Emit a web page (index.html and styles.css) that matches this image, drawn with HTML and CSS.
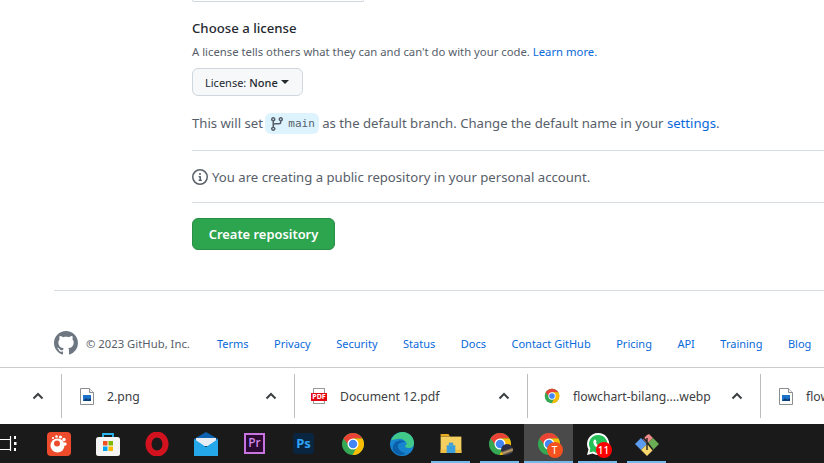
FILE: index.html
```html
<!DOCTYPE html>
<html lang="en">
<head>
    <meta charset="UTF-8">
    <meta name="viewport" content="width=device-width, initial-scale=1.0">
    <title>New repository</title>
    <link rel="stylesheet" href="styles.css">
</head>
<body>
    <svg class="defs" width="0" height="0">
        <symbol id="chrome" viewBox="0 0 48 48">
            <circle cx="24" cy="24" r="22" fill="#34a853"/>
            <path d="M5 13A22 22 0 0 1 43 13H24L15 26Z" fill="#ea4335"/>
            <path d="M43 13A22 22 0 0 1 23 46L33 28L24 13Z" fill="#fbbc04"/>
            <circle cx="24" cy="24" r="11" fill="#fff"/>
            <circle cx="24" cy="24" r="8.5" fill="#4285f4"/>
        </symbol>
        <symbol id="chevron" viewBox="0 0 12 8">
            <path d="M1.500 6.500 6 2l4.500 4.500" fill="none" stroke="#3c4043" stroke-width="2"/>
        </symbol>
        <symbol id="imgfile" viewBox="0 0 14 17">
            <path d="M.5.500h9l4 4v12H.500z" fill="#fff" stroke="#8a8d91"/>
            <path d="M9.500.500v4h4" fill="#eee" stroke="#8a8d91"/>
            <rect x="3" y="7" width="8" height="6" fill="#1a73c8"/>
            <path d="M3 13l3-3 2 1.500 3-1.500v3z" fill="#0b3f7a"/>
        </symbol>
    </svg>

    <div class="page">
        <main class="main">
            <div class="form">
                <div class="cut-input"></div>
                <h3 class="title">Choose a license</h3>
                <p class="note">A license tells others what they can and can't do with your code. <a href="#">Learn more.</a></p>
                <button class="select-btn">License: <b>None</b><span class="caret"></span></button>
                <p class="line">This will set <span class="branch"><svg width="16" height="16" viewBox="0 0 16 16"><path fill="#57606a" d="M9.500 3.250a2.250 2.250 0 1 1 3 2.122V6A2.500 2.500 0 0 1 10 8.500H6a1 1 0 0 0-1 1v1.128a2.251 2.251 0 1 1-1.500 0V5.372a2.250 2.250 0 1 1 1.500 0v1.836A2.493 2.493 0 0 1 6 7h4a1 1 0 0 0 1-1v-.628A2.250 2.250 0 0 1 9.500 3.250Zm-6 0a.750.750 0 1 0 1.500 0 .750.750 0 0 0-1.500 0Zm8.250-.750a.750.750 0 1 0 0 1.500.750.750 0 0 0 0-1.500ZM4.250 12a.750.750 0 1 0 0 1.500.750.750 0 0 0 0-1.500Z"/></svg><code>main</code></span> as the default branch. Change the default name in your <a href="#">settings</a>.</p>
                <hr class="rule rule-first">
                <p class="info">
                    <svg width="16" height="16" viewBox="0 0 16 16"><path fill="#57606a" d="M0 8a8 8 0 1 1 16 0A8 8 0 0 1 0 8Zm8-6.500a6.500 6.500 0 1 0 0 13 6.500 6.500 0 0 0 0-13ZM6.500 7.750A.750.750 0 0 1 7.250 7h1a.750.750 0 0 1 .750.750v2.750h.250a.750.750 0 0 1 0 1.500h-2a.750.750 0 0 1 0-1.500h.250v-2h-.250a.750.750 0 0 1-.750-.750ZM8 6a1 1 0 1 1 0-2 1 1 0 0 1 0 2Z"/></svg>
                    You are creating a public repository in your personal account.
                </p>
                <hr class="rule rule-second">
                <button class="create-btn">Create repository</button>
            </div>
            <footer class="footer">
                <div class="footer-row">
                    <svg width="24" height="24" viewBox="0 0 16 16"><path fill="#6e7781" d="M8 0C3.580 0 0 3.580 0 8c0 3.540 2.290 6.530 5.470 7.590.4.070.55-.17.55-.38 0-.19-.01-.82-.01-1.490-2.010.37-2.530-.49-2.690-.94-.09-.23-.48-.94-.82-1.130-.28-.15-.68-.52-.01-.53.63-.01 1.080.58 1.230.82.72 1.210 1.870.87 2.330.66.07-.52.28-.87.51-1.070-1.780-.2-3.640-.89-3.640-3.950 0-.87.31-1.590.82-2.150-.08-.2-.36-1.020.08-2.120 0 0 .67-.21 2.200.82.64-.18 1.320-.27 2-.27.68 0 1.360.09 2 .27 1.530-1.040 2.200-.82 2.200-.82.44 1.100.16 1.920.08 2.120.51.56.82 1.270.82 2.150 0 3.070-1.870 3.750-3.650 3.950.29.25.54.73.54 1.480 0 1.070-.01 1.930-.01 2.200 0 .21.15.46.55.38A8.013 8.013 0 0 0 16 8c0-4.420-3.580-8-8-8z"/></svg>
                    <span class="copy">© 2023 GitHub, Inc.</span>
                    <nav class="footer-links">
                        <a href="#">Terms</a>
                        <a href="#">Privacy</a>
                        <a href="#">Security</a>
                        <a href="#">Status</a>
                        <a href="#">Docs</a>
                        <a href="#">Contact GitHub</a>
                        <a href="#">Pricing</a>
                        <a href="#">API</a>
                        <a href="#">Training</a>
                        <a href="#">Blog</a>
                    </nav>
                </div>
            </footer>
        </main>

        <!-- download bar -->
        <div class="shelf">
            <div class="shelf-item shelf-first">
                <svg class="chev" width="12" height="8"><use href="#chevron"/></svg>
            </div>
            <div class="shelf-item">
                <svg class="file-icon" width="14" height="17"><use href="#imgfile"/></svg>
                <span class="file-name">2.png</span>
                <svg class="chev" width="12" height="8"><use href="#chevron"/></svg>
            </div>
            <div class="shelf-item">
                <span class="pdf-icon"><span class="pdf-tag">PDF</span></span>
                <span class="file-name">Document 12.pdf</span>
                <svg class="chev" width="12" height="8"><use href="#chevron"/></svg>
            </div>
            <div class="shelf-item">
                <svg class="file-icon chrome-file" width="16" height="16"><use href="#chrome"/></svg>
                <span class="file-name">flowchart-bilang....webp</span>
                <svg class="chev" width="12" height="8"><use href="#chevron"/></svg>
            </div>
            <div class="shelf-item shelf-last">
                <svg class="file-icon" width="14" height="17"><use href="#imgfile"/></svg>
                <span class="file-name">flow</span>
            </div>
        </div>

        <!-- taskbar -->
        <div class="taskbar">
            <div class="slot">
                <svg width="49" height="39" viewBox="0 0 49 39"><path d="M15 15.500h10.500v10H15M25.500 12v15" fill="none" stroke="#fff" stroke-width="1.200"/><rect x="29" y="12" width="2" height="3" fill="#fff"/><rect x="29" y="18" width="2.500" height="3" fill="#fff"/><rect x="29" y="24" width="2" height="3" fill="#fff"/></svg>
            </div>
            <div class="slot">
                <svg width="24" height="24" viewBox="0 0 24 24"><rect width="24" height="24" rx="4" fill="#ee4a2c"/><circle cx="10.500" cy="13.500" r="7" fill="#fff"/><circle cx="10" cy="11.500" r="3" fill="#ee4a2c"/><circle cx="18" cy="12" r="1.700" fill="#fff"/><circle cx="17" cy="7.500" r="1.700" fill="#fff"/><circle cx="13.500" cy="5" r="1.600" fill="#fff"/><circle cx="9.500" cy="4.500" r="1.300" fill="#fff"/><circle cx="6" cy="6" r="1.100" fill="#fff"/></svg>
            </div>
            <div class="slot">
                <svg width="24" height="24" viewBox="0 0 24 24"><path d="M7 6V2h10v4" fill="none" stroke="#29b6f0" stroke-width="1.800"/><rect y="5" width="24" height="19" rx="2.500" fill="#f4f4f4"/><rect x="7" y="9" width="4.500" height="4.500" fill="#f25022"/><rect x="12.500" y="9" width="4.500" height="4.500" fill="#7fba00"/><rect x="7" y="14.500" width="4.500" height="4.500" fill="#00a4ef"/><rect x="12.500" y="14.500" width="4.500" height="4.500" fill="#ffb900"/></svg>
            </div>
            <div class="slot">
                <svg width="24" height="24" viewBox="0 0 24 24"><ellipse cx="12" cy="12" rx="8.500" ry="9.500" fill="none" stroke="#d3121f" stroke-width="6"/></svg>
            </div>
            <div class="slot">
                <svg width="24" height="24" viewBox="0 0 24 24"><path d="M0 7 12 0l12 7v3H0z" fill="#0f62b0"/><path d="M2 6h20v8H2z" fill="#e8eef4"/><path d="M0 7l12 8 12-8v17H0z" fill="#25a8ea"/></svg>
            </div>
            <div class="slot">
                <span class="pr-icon">Pr</span>
            </div>
            <div class="slot">
                <span class="ps-icon">Ps</span>
            </div>
            <div class="slot">
                <svg width="24" height="24"><use href="#chrome"/></svg>
            </div>
            <div class="slot">
                <svg width="24" height="24" viewBox="0 0 24 24"><circle cx="12" cy="12" r="12" fill="#1784d0"/><path d="M1 9C3 2 9 0 13 0c6 0 11 5 11 11 0 3-2 5-5 5-3 0-4-1-4-2 2-1 2-3 1-4-2-3-6-4-9-3-3 .5-5 1-6 2z" fill="#41c98a"/><path d="M8 14c0 4 4 7 8 7-5 4-11 1-13-3-1-3 1-8 5-9 3-1 6 0 7 1-4 0-7 1-7 4z" fill="#0b5ea8"/></svg>
            </div>
            <div class="slot slot-open">
                <svg width="22" height="19" viewBox="0 0 24 22"><path d="M0 0h9l2 3h-11z" fill="#e8a91f"/><rect y="3" width="24" height="19" fill="#f5cf5f"/><rect y="18" width="24" height="4" fill="#eebf45"/><path d="M7 13h10v9H7z" fill="#3aa0dd"/><path d="M9.500 10h5v3h-5z" fill="#3aa0dd"/></svg>
            </div>
            <div class="slot slot-open">
                <span class="stack">
                    <svg width="24" height="24"><use href="#chrome"/></svg>
                    <span class="avatar"></span>
                </span>
            </div>
            <div class="slot slot-active">
                <span class="stack">
                    <svg width="24" height="24"><use href="#chrome"/></svg>
                    <span class="badge badge-t">T</span>
                </span>
            </div>
            <div class="slot slot-open">
                <span class="stack">
                    <svg width="24" height="24" viewBox="0 0 24 24"><path d="M12 1a11 11 0 0 0-9.500 16.500L1 23l5.700-1.500A11 11 0 1 0 12 1z" fill="#fff"/><path d="M12 3a9 9 0 0 0-7.700 13.600L3.500 20.500l3.900-1A9 9 0 1 0 12 3z" fill="#25c158"/><path d="M8 8c1-1 2 0 2.500 1.500L10 11c1 1.500 2 2.500 3.500 3l1.300-.8c1.500.5 2.500 1.200 2 2.300-1 1.500-3 1.500-6 0C8 14 6.500 10 8 8z" fill="#fff"/></svg>
                    <span class="badge badge-n">11</span>
                </span>
            </div>
            <div class="slot slot-open">
                <svg width="24" height="24" viewBox="0 0 24 24"><path d="M8 7 12 3l2-1 4 4-2 2-4 4z" fill="#ec8a8a"/><path d="M0 12l6-6 6 6-6 6z" fill="#5b9cf0"/><path d="M12 12l6-6 6 6-6 6z" fill="#6cae54"/><path d="M6 18l6-6 6 6-6 6z" fill="#f5d76e"/><path d="M8 5l10 13M12 6v12" stroke="#222" stroke-width="1.400" fill="none"/></svg>
            </div>
        </div>
    </div>
</body>
</html>
```

FILE: styles.css
```css
* {
    box-sizing: border-box;
}

body {
    margin: 0;
    background-color: #fff;
    color: #57606a;
    font-family: "Noto Sans", Arial, sans-serif;
    overflow: hidden;
}

a {
    color: #0969da;
    text-decoration: none;
}

.defs {
    display: block;
    height: 0;
}

.page {
    display: flex;
    flex-direction: column;
    width: 824px;
    height: 463px;
    overflow: hidden;
}

.main {
    height: 367px;
    flex-shrink: 0;
    overflow: hidden;
}

.form {
    padding-left: 192px;
}

.cut-input {
    width: 172px;
    height: 2px;
    border: 1px solid #d0d7de;
    border-top: 0;
    border-radius: 0 0 4px 4px;
}

.title {
    margin: 16px 0 0;
    color: #24292f;
    font-size: 13.2px;
    font-weight: 500;
    line-height: 20px;
}

.note {
    margin: 5px 0 0;
    font-size: 11.3px;
    line-height: 18px;
}

.select-btn {
    display: flex;
    align-items: center;
    height: 28px;
    width: 111px;
    margin-top: 7px;
    padding: 0 0 0 12px;
    background-color: #f6f8fa;
    border: 1px solid #d0d7de;
    border-radius: 6px;
    color: #24292f;
    font-family: inherit;
    font-size: 11px;
}

.select-btn b {
    margin-left: 3px;
    font-weight: 500;
}

.caret {
    margin-left: 3px;
    border-top: 4px solid #24292f;
    border-left: 4px solid transparent;
    border-right: 4px solid transparent;
}

.line {
    height: 21px;
    margin: 17px 0 0;
    font-size: 13.15px;
    line-height: 21px;
    white-space: nowrap;
}

.branch {
    display: inline-flex;
    align-items: center;
    vertical-align: top;
    gap: 3px;
    height: 21px;
    margin-left: -1px;
    padding: 0 4px;
    background-color: #ddf4ff;
    border-radius: 6px;
}

.branch code {
    font-family: "DejaVu Sans Mono", "Liberation Mono", monospace;
    font-size: 11px;
}

.rule {
    height: 1px;
    margin: 0;
    background-color: #d8dee4;
    border: 0;
}

.rule-first {
    margin-top: 16px;
}

.rule-second {
    margin-top: 15px;
}

.info {
    display: flex;
    align-items: center;
    gap: 4px;
    height: 20px;
    margin: 16px 0 0;
    font-size: 13.15px;
}

.create-btn {
    display: block;
    width: 143px;
    height: 32px;
    margin-top: 15px;
    background-color: #2da44e;
    border: 1px solid #298e46;
    border-radius: 6px;
    color: #fff;
    font-family: inherit;
    font-size: 12.9px;
    font-weight: 600;
}

.footer {
    margin: 40px 0 0 54px;
    padding-top: 40px;
    border-top: 1px solid #d8dee4;
}

.footer-row {
    display: flex;
    align-items: center;
    white-space: nowrap;
}

.copy {
    margin-left: 8px;
    font-size: 11.3px;
}

.footer-links {
    display: flex;
    gap: 25.5px;
    margin-left: 27px;
    font-size: 11px;
}

/* download bar */
.shelf {
    display: flex;
    align-items: center;
    height: 57px;
    flex-shrink: 0;
    background-color: #fff;
    border-top: 1px solid #ccc;
    overflow: hidden;
}

.shelf-item {
    display: flex;
    align-items: center;
    flex: 0 0 233px;
    height: 44px;
    padding-left: 18px;
    border-right: 1px solid #bdbdbd;
    position: relative;
}

.shelf-first {
    flex-basis: 62px;
}

.shelf-last {
    flex-basis: 63px;
    border-right: 0;
}

.file-icon {
    flex-shrink: 0;
}

.chrome-file {
    margin-left: -2px;
}

.file-name {
    margin-left: 13px;
    color: #3c4043;
    font-size: 12.2px;
    white-space: nowrap;
}

.shelf-item .chev {
    position: absolute;
    right: 17px;
    top: 18px;
}

.pdf-icon {
    position: relative;
    display: block;
    flex-shrink: 0;
    width: 12px;
    height: 16px;
    background-color: #fff;
    border: 1px solid #9a9a9a;
}

.pdf-tag {
    position: absolute;
    left: -3px;
    top: 4px;
    width: 16px;
    height: 8px;
    background-color: #e30613;
    color: #fff;
    font-size: 7px;
    font-weight: 700;
    line-height: 8px;
    text-align: center;
}

.pdf-icon + .file-name {
    margin-left: 15px;
}

/* taskbar */
.taskbar {
    display: flex;
    flex: 1;
    margin-left: -15px;
    background-color: #1a1a1a;
}

.slot {
    display: flex;
    align-items: center;
    justify-content: center;
    flex: 0 0 49px;
    height: 39px;
    position: relative;
}

.slot-open::after {
    content: "";
    position: absolute;
    left: 5px;
    right: 5px;
    bottom: 0;
    height: 2px;
    background-color: #76b9ed;
}

.slot-active {
    background-color: #4a4a4a;
    box-shadow: inset 0 -2px 0 #76b9ed;
}

.stack {
    position: relative;
    display: block;
    width: 24px;
    height: 24px;
}

.pr-icon {
    display: block;
    width: 21px;
    height: 21px;
    background-color: #2a0a33;
    border: 2px solid #c774e0;
    color: #d78cf0;
    font-size: 12px;
    font-weight: 500;
    line-height: 16px;
    text-align: center;
}

.ps-icon {
    display: block;
    width: 21px;
    height: 21px;
    background-color: #0a2540;
    border-radius: 3px;
    color: #2fa3f7;
    font-size: 13px;
    font-weight: 700;
    line-height: 20px;
    text-align: center;
}

.avatar {
    position: absolute;
    right: -1px;
    bottom: 0;
    width: 12px;
    height: 12px;
    background: linear-gradient(160deg, #2a2f45 45%, #c9a36a 60%, #1c2033 80%);
    border-radius: 50%;
}

.badge {
    position: absolute;
    right: -2px;
    bottom: -2px;
    width: 16px;
    height: 16px;
    border-radius: 50%;
    color: #fff;
    font-size: 10px;
    line-height: 16px;
    text-align: center;
}

.badge-t {
    background-color: #f4511e;
}

.badge-n {
    background-color: #f00;
    font-weight: 500;
}
```
